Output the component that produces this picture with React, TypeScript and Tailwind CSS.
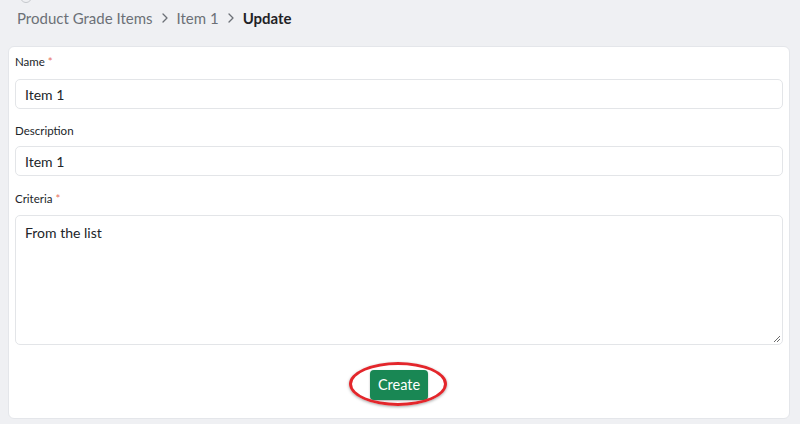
import React from "react";

function Label({ text, required }: { text: string; required?: boolean }) {
  return (
    <label className="block text-[11.5px] leading-[18px] text-[#212529]">
      {text}
      {required && <span className="ml-[3px] text-[#e8725f]">*</span>}
    </label>
  );
}

function Chevron() {
  return (
    <svg className="mx-[6px] h-[12px] w-[12px]" viewBox="0 0 12 12" fill="none">
      <path d="M4 2l4 4-4 4" stroke="#6c7077" strokeWidth="1.3" strokeLinecap="round" strokeLinejoin="round" />
    </svg>
  );
}

export default function App() {
  return (
    <div
      className="h-[424px] w-[800px] overflow-hidden bg-[#eff0f3] px-2"
      style={{ fontFamily: 'Lato, "Open Sans", sans-serif' }}
    >
      <div className="relative h-[46px]">
        <div className="absolute left-[12px] top-[-9px] h-[12px] w-[12px] rounded-full border border-[#c5c8cc]" />
        <nav className="flex items-center pl-[9px] pt-[6px] text-[15px] leading-[24px] text-[#6c7077]">
          <span>Product Grade Items</span>
          <Chevron />
          <span>Item 1</span>
          <Chevron />
          <span className="font-bold text-[#1f2226]">Update</span>
        </nav>
      </div>

      <div className="mr-[2px] h-[373px] rounded-[6px] border border-[#e4e6ea] bg-white px-[6px] pt-[6px]">
        <Label text="Name" required />
        <div className="mt-[8px] flex h-[30px] items-center rounded-[5px] border border-[#e3e5e8] px-[9px] text-[14px] text-[#212529]">
          Item 1
        </div>

        <div className="mt-[13px]">
          <Label text="Description" />
        </div>
        <div className="mt-[6px] flex h-[30px] items-center rounded-[5px] border border-[#e3e5e8] px-[9px] text-[14px] text-[#212529]">
          Item 1
        </div>

        <div className="mt-[14px]">
          <Label text="Criteria" required />
        </div>
        <div className="relative mt-[7px] h-[130px] rounded-[5px] border border-[#e3e5e8] px-[9px] pt-[6px] text-[14px] text-[#212529]">
          From the list
          <svg className="absolute bottom-[1px] right-[1px] h-[8px] w-[8px]" viewBox="0 0 8 8">
            <path d="M7 1L1 7M7 4L4 7" stroke="#6b6b6b" strokeWidth="1" />
          </svg>
        </div>

        <div className="mt-[25px] flex justify-center">
          <div className="relative">
            <div className="pointer-events-none absolute left-[-21px] top-[-8px] h-[44px] w-[98px] rounded-[50%] border-[3px] border-[#e3262b] shadow-[0_1px_3px_rgba(0,0,0,0.35)]" />
            <button className="flex h-[30px] w-[58px] items-center justify-center rounded-[4px] bg-[#198754] text-[14.5px] text-white shadow-[0_1px_2px_rgba(0,0,0,0.3)]">
              Create
            </button>
          </div>
        </div>
      </div>
    </div>
  );
}
